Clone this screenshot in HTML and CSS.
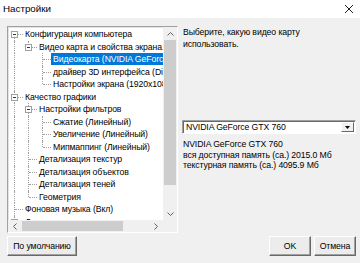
FILE: index.html
```html
<!DOCTYPE html>
<html lang="ru">
<head>
  <meta charset="utf-8">
  <title>Настройки</title>
  <link rel="stylesheet" href="styles.css">
</head>
<body>
  <div class="window">
    <div class="titlebar">
      <span class="titlebar__text">Настройки</span>
      <svg class="titlebar__close" width="10" height="10" viewBox="0 0 10 10" aria-hidden="true">
        <path d="M1 1 9 9M9 1 1 9" stroke="#222" stroke-width="1" fill="none"></path>
      </svg>
    </div>

    <div class="content">
      <div class="main">
        <div class="tree">
          <ul class="tree__list">
            <li class="tree__row">
              <span class="guide guide--first"><span class="box"></span></span>
              <span class="tree__label">Конфигурация компьютера</span>
            </li>
            <li class="tree__row">
              <span class="guide guide--pipe"></span>
              <span class="guide guide--elbow"><span class="box"></span></span>
              <span class="tree__label">Видео карта и свойства экрана.</span>
            </li>
            <li class="tree__row">
              <span class="guide guide--pipe"></span>
              <span class="guide"></span>
              <span class="guide guide--tee"></span>
              <span class="tree__label tree__label--selected">Видеокарта (NVIDIA GeForce GTX 760)</span>
            </li>
            <li class="tree__row">
              <span class="guide guide--pipe"></span>
              <span class="guide"></span>
              <span class="guide guide--tee"></span>
              <span class="tree__label">драйвер 3D интерфейса (Direct3D 9)</span>
            </li>
            <li class="tree__row">
              <span class="guide guide--pipe"></span>
              <span class="guide"></span>
              <span class="guide guide--elbow"></span>
              <span class="tree__label">Настройки экрана (1920x1080)</span>
            </li>
            <li class="tree__row">
              <span class="guide guide--tee"><span class="box"></span></span>
              <span class="tree__label">Качество графики</span>
            </li>
            <li class="tree__row">
              <span class="guide guide--pipe"></span>
              <span class="guide guide--tee"><span class="box"></span></span>
              <span class="tree__label">Настройки фильтров</span>
            </li>
            <li class="tree__row">
              <span class="guide guide--pipe"></span>
              <span class="guide guide--pipe"></span>
              <span class="guide guide--tee"></span>
              <span class="tree__label">Сжатие (Линейный)</span>
            </li>
            <li class="tree__row">
              <span class="guide guide--pipe"></span>
              <span class="guide guide--pipe"></span>
              <span class="guide guide--tee"></span>
              <span class="tree__label">Увеличение (Линейный)</span>
            </li>
            <li class="tree__row">
              <span class="guide guide--pipe"></span>
              <span class="guide guide--pipe"></span>
              <span class="guide guide--elbow"></span>
              <span class="tree__label">Мипмаппинг (Линейный)</span>
            </li>
            <li class="tree__row">
              <span class="guide guide--pipe"></span>
              <span class="guide guide--tee"></span>
              <span class="tree__label">Детализация текстур</span>
            </li>
            <li class="tree__row">
              <span class="guide guide--pipe"></span>
              <span class="guide guide--tee"></span>
              <span class="tree__label">Детализация объектов</span>
            </li>
            <li class="tree__row">
              <span class="guide guide--pipe"></span>
              <span class="guide guide--tee"></span>
              <span class="tree__label">Детализация теней</span>
            </li>
            <li class="tree__row">
              <span class="guide guide--pipe"></span>
              <span class="guide guide--elbow"></span>
              <span class="tree__label">Геометрия</span>
            </li>
            <li class="tree__row">
              <span class="guide guide--tee"></span>
              <span class="tree__label">Фоновая музыка (Вкл)</span>
            </li>
            <li class="tree__row">
              <span class="guide guide--tee"><span class="box"></span></span>
              <span class="tree__label">Дополнительно</span>
            </li>
          </ul>

          <div class="scroll scroll--v">
            <span class="scroll__arrow">
              <svg width="7" height="4" viewBox="0 0 7 4"><path d="M0.5 3.5 3.5 0.5 6.5 3.5" stroke="#606060" fill="none"></path></svg>
            </span>
            <span class="scroll__track"><span class="scroll__thumb"></span></span>
            <span class="scroll__arrow">
              <svg width="7" height="4" viewBox="0 0 7 4"><path d="M0.5 0.5 3.5 3.5 6.5 0.5" stroke="#606060" fill="none"></path></svg>
            </span>
          </div>

          <div class="scroll scroll--h">
            <span class="scroll__arrow">
              <svg width="4" height="7" viewBox="0 0 4 7"><path d="M3.5 0.5 0.5 3.5 3.5 6.5" stroke="#606060" fill="none"></path></svg>
            </span>
            <span class="scroll__track"><span class="scroll__thumb"></span></span>
            <span class="scroll__arrow">
              <svg width="4" height="7" viewBox="0 0 4 7"><path d="M0.5 0.5 3.5 3.5 0.5 6.5" stroke="#606060" fill="none"></path></svg>
            </span>
          </div>

          <div class="tree__corner"></div>
        </div>

        <div class="panel">
          <p class="panel__hint">Выберите, какую видео карту использовать.</p>

          <div class="select">
            <span class="select__value">NVIDIA GeForce GTX 760</span>
            <span class="select__btn">
              <svg width="5" height="3" viewBox="0 0 5 3"><path d="M0 0h5L2.5 3z" fill="#000"></path></svg>
            </span>
          </div>

          <p class="panel__info">
            NVIDIA GeForce GTX 760<br>
            вся доступная память (ca.) 2015.0 Мб<br>
            текстурная память (ca.) 4095.9 Мб
          </p>
        </div>
      </div>

      <div class="footer">
        <button class="btn btn--wide">По умолчанию</button>
        <div class="footer__right">
          <button class="btn">OK</button>
          <button class="btn">Отмена</button>
        </div>
      </div>
    </div>
  </div>
</body>
</html>
```

FILE: styles.css
```css
*, *::before, *::after {
  margin: 0;
  padding: 0;
  box-sizing: border-box;
}

html, body {
  width: 360px;
  height: 263px;
  overflow: hidden;
}

body {
  background: #f0f0f0;
  font-family: "Liberation Sans", Arial, sans-serif;
  font-size: 8.7px;
  letter-spacing: -0.1px;
  color: #000;
}

ul, li {
  list-style: none;
}

.window {
  display: flex;
  flex-direction: column;
  height: 100%;
}

/* Заголовок окна */
.titlebar {
  display: flex;
  align-items: center;
  justify-content: space-between;
  height: 18px;
  padding: 0 6px 1px 3px;
  background: #fff;
}

.titlebar__text {
  font-size: 9.8px;
  letter-spacing: 0;
  color: #000;
}

.content {
  display: flex;
  flex-direction: column;
  flex: 1;
  padding: 8px 4px 0 7px;
}

.main {
  display: flex;
  gap: 4px;
}

/* Дерево настроек */
.tree {
  display: grid;
  grid-template-columns: 1fr 14px;
  grid-template-rows: 1fr 12px;
  width: 171px;
  height: 207px;
  background: #fff;
  border: 1px solid;
  border-color: #a0a0a0 #fff #fff #a0a0a0;
  box-shadow: inset 1px 1px 0 #e3e3e3;
  overflow: hidden;
}

.tree__list {
  padding: 1px 0 0 1px;
  overflow: hidden;
}

.tree__row {
  display: flex;
  align-items: center;
  height: 12.5px;
  white-space: nowrap;
}

.guide {
  position: relative;
  flex: none;
  width: 14px;
  height: 100%;
}

.guide--pipe::before,
.guide--tee::before,
.guide--elbow::before,
.guide--first::before {
  content: "";
  position: absolute;
  left: 5px;
  top: 0;
  bottom: 0;
  border-left: 1px dotted #a0a0a0;
}

.guide--elbow::before {
  bottom: 50%;
}

.guide--first::before {
  top: 50%;
}

.guide--tee::after,
.guide--elbow::after,
.guide--first::after {
  content: "";
  position: absolute;
  left: 6px;
  right: 0;
  top: 6px;
  border-top: 1px dotted #a0a0a0;
}

.box {
  position: absolute;
  z-index: 1;
  left: 2px;
  top: 3px;
  width: 7px;
  height: 7px;
  background: #fff;
  border: 1px solid #a0a0a0;
}

.box::before {
  content: "";
  position: absolute;
  left: 1px;
  top: 2px;
  width: 3px;
  border-top: 1px solid #333;
}

.tree__label {
  padding: 0 2px;
  line-height: 12px;
}

.tree__label--selected {
  background: #0078d7;
  color: #fff;
}

.tree__corner {
  background: #f0f0f0;
}

/* Полосы прокрутки */
.scroll {
  display: flex;
  background: #f0f0f0;
}

.scroll--v {
  flex-direction: column;
}

.scroll__arrow {
  display: flex;
  align-items: center;
  justify-content: center;
  flex: none;
  width: 14px;
  height: 13px;
}

.scroll--h .scroll__arrow {
  height: 12px;
}

.scroll__track {
  display: flex;
  flex: 1;
}

.scroll--v .scroll__track {
  flex-direction: column;
}

.scroll__thumb {
  background: #cdcdcd;
}

.scroll--v .scroll__thumb {
  width: 12px;
  height: 145px;
  margin: 0 1px;
}

.scroll--h .scroll__thumb {
  height: 10px;
  width: 101px;
  margin: 1px 0;
}

/* Правая панель */
.panel {
  display: flex;
  flex-direction: column;
  flex: 1;
  padding-top: 1px;
}

.panel__hint {
  padding-left: 1px;
  line-height: 11.5px;
}

.select {
  display: flex;
  height: 14px;
  margin-top: 70px;
  background: #fff;
  border: 1px solid;
  border-color: #a0a0a0 #fff #fff #a0a0a0;
  box-shadow: inset 1px 1px 0 #696969;
}

.select__value {
  flex: 1;
  padding: 1px 0 0 3px;
  line-height: 11px;
}

.select__btn {
  display: flex;
  align-items: center;
  justify-content: center;
  width: 13px;
  margin: 1px 1px 1px 0;
  background: #f0f0f0;
  border: 1px solid;
  border-color: #fff #696969 #696969 #fff;
}

.panel__info {
  margin-top: 5px;
  padding-left: 1px;
  line-height: 10.5px;
}

/* Кнопки */
.footer {
  display: flex;
  justify-content: space-between;
  align-items: center;
  margin-top: 3px;
}

.footer__right {
  display: flex;
  gap: 3px;
}

.btn {
  width: 42px;
  height: 20px;
  font-family: inherit;
  font-size: 8.7px;
  letter-spacing: -0.1px;
  color: #000;
  background: #ececec;
  border: 1px solid;
  border-color: #fff #696969 #696969 #fff;
  box-shadow: inset -1px -1px 0 #a0a0a0;
}

.btn--wide {
  width: 70px;
}
```
